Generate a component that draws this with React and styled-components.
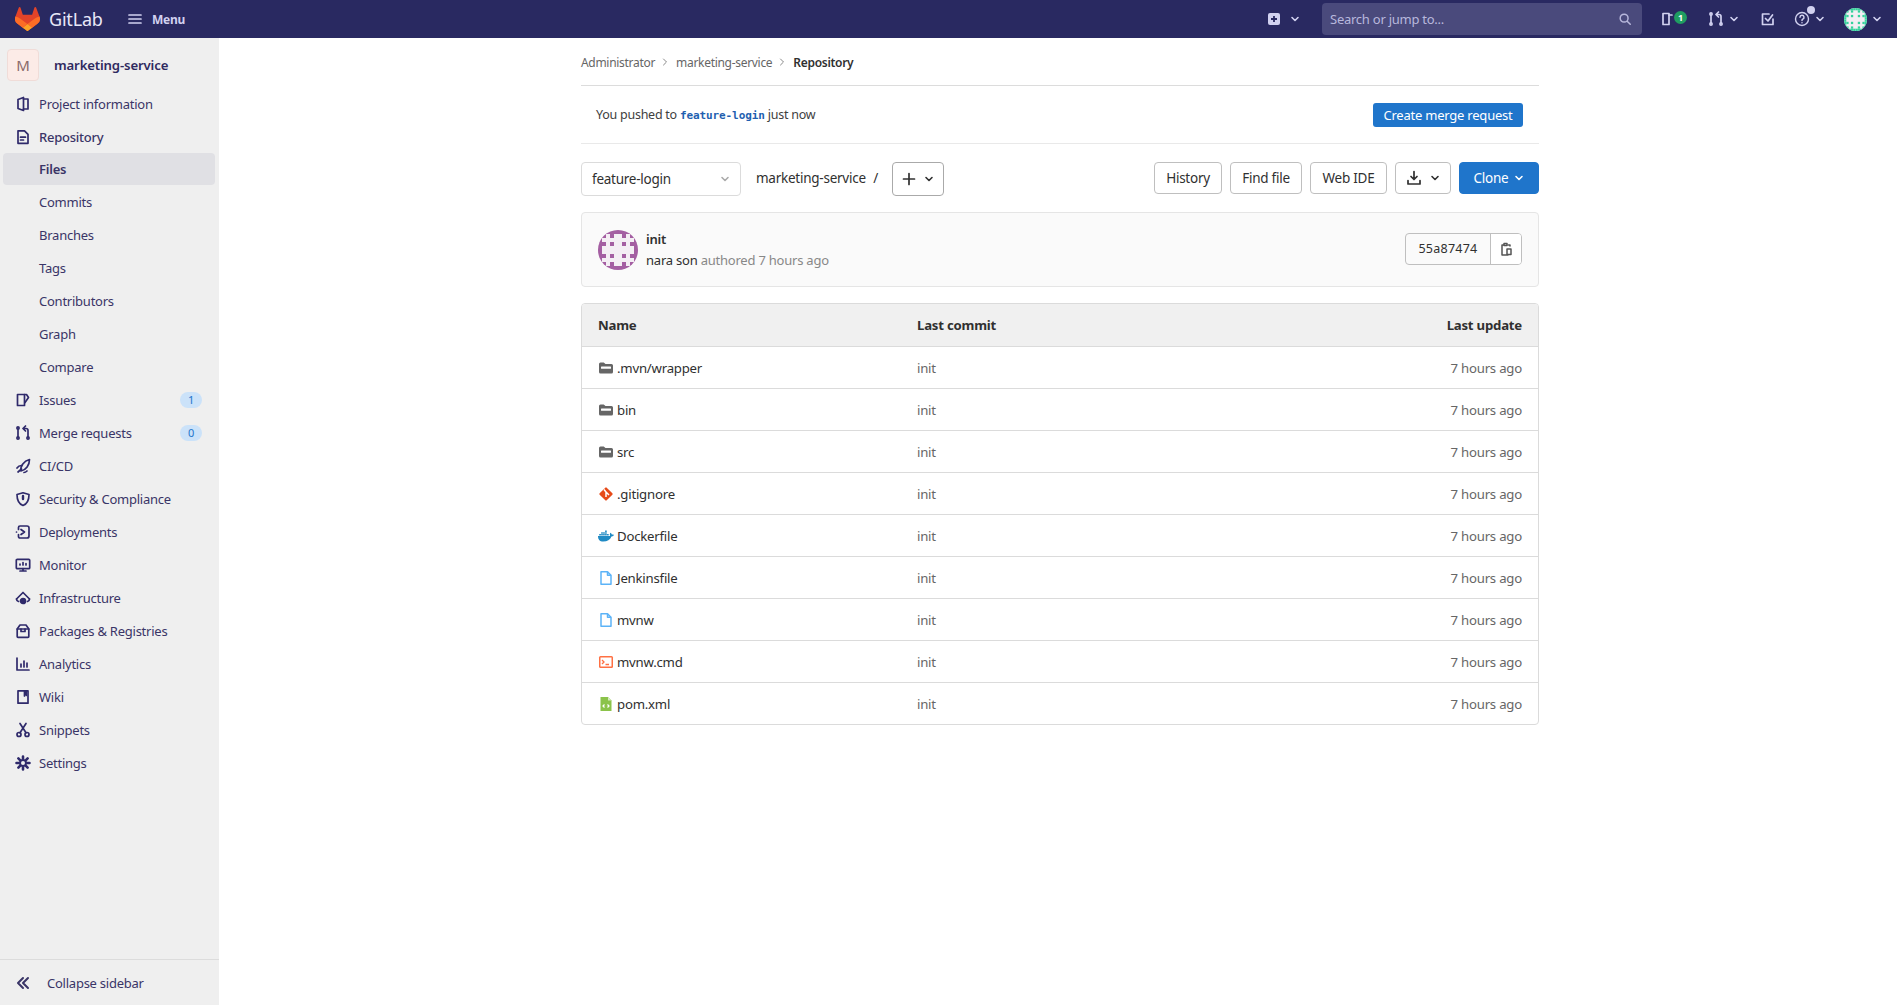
import React from "react";
import styled, { createGlobalStyle } from "styled-components";
import { FaDocker } from "react-icons/fa";

const Global = createGlobalStyle`
  html, body { margin: 0; height: 100%; background: #fff; }
  body { font-family: "Noto Sans", "Liberation Sans", sans-serif; font-size: 13px; color: #303030; overflow: hidden; }
  * { box-sizing: border-box; }
  #root { height: 100%; }
`;

const Page = styled.div`display: flex; flex-direction: column; height: 1005px;`;
const TopBar = styled.header`
  height: 38px; flex: none; background: #292961; display: flex; align-items: center; padding-left: 15px; color: #d1d1f0;
`;
const LogoText = styled.span`font-size: 18px; color: #e8e8f8; margin-left: 9px; letter-spacing: -0.2px; width: 51px;`;
const MenuBtn = styled.div`display: flex; align-items: center; margin-left: 27px; gap: 9px; font-size: 12px; font-weight: 700; color: #d1d1f0; letter-spacing: -0.3px;`;
const TopRight = styled.div`margin-left: auto; display: flex; align-items: center; height: 100%;`;
const TopIcon = styled.div`display: flex; align-items: center; gap: ${p => p.$gap ?? 5}px; margin-left: ${p => p.$ml ?? 0}px; color: #d1d1f0; position: relative;`;
const Search = styled.div`
  width: 320px; height: 32px; margin-left: 22px; background: #4a4a7c; border-radius: 4px; display: flex; align-items: center; justify-content: space-between;
  padding: 0 10px 0 8px; font-size: 13px; color: #b8b8dc; letter-spacing: -0.25px;
`;
const CountBadge = styled.span`
  position: absolute; left: 14px; top: 0; width: 13px; height: 13px; border-radius: 50%; background: #1f9d61; color: #fff; font-size: 9px; line-height: 13px; text-align: center; font-weight: 700;
`;
const Dot = styled.span`position: absolute; left: 13px; top: -5px; width: 8px; height: 8px; border-radius: 50%; background: #d1d1f0;`;

const Body = styled.div`flex: 1; display: flex; min-height: 0;`;
const Sidebar = styled.aside`width: 219px; flex: none; background: #efefef; display: flex; flex-direction: column;`;
const ProjectHead = styled.div`display: flex; align-items: center; padding: 8px 0 0 7px; height: 46px; flex: none; margin-bottom: 1px;`;
const ProjectAvatar = styled.div`
  width: 32px; height: 32px; border-radius: 4px; background: #fcebe7; border: 1px solid #f0dcd8; display: flex; align-items: center; justify-content: center; font-size: 15px; color: #8a6a6a;
`;
const ProjectName = styled.span`margin-left: 15px; font-weight: 600; font-size: 13.2px; color: #2f2a5f; letter-spacing: -0.15px;`;
const Nav = styled.nav`display: flex; flex-direction: column; padding-top: 2px;`;
const NavItem = styled.div`
  display: flex; align-items: center; height: ${p => p.$h || 33}px; margin: 0 4px 0 3px; padding: 0 13px 0 12px; border-radius: 4px; color: #3a3567;
  font-size: 13px; letter-spacing: -0.24px; flex: none;
  font-weight: ${p => (p.$strong ? 500 : 400)};
  background: ${p => (p.$active ? "#e0e0e4" : "transparent")};
  ${p => p.$active && "font-weight: 600;"}
`;
const NavIcon = styled.span`width: 16px; height: 16px; margin-right: 8px; display: flex; color: #2f2a6b; flex: none;`;
const NavSpacer = styled.span`width: 24px; flex: none;`;
const NavBadge = styled.span`
  margin-left: auto; width: 22px; height: 16px; border-radius: 8px; background: #cbe2f9; color: #1f75cb; font-size: 11px; text-align: center; line-height: 16px;
`;
const Collapse = styled.div`
  margin-top: auto; height: 46px; flex: none; border-top: 1px solid #dcdcdc; display: flex; align-items: center; padding-left: 15px; color: #3a3567; letter-spacing: -0.24px;
`;
const CollapseLabel = styled.span`margin-left: 16px;`;

const Main = styled.main`flex: 1; padding-left: 362px;`;
const Container = styled.div`width: 958px;`;
const Crumbs = styled.div`height: 48px; display: flex; align-items: center; font-size: 12px; border-bottom: 1px solid #dcdcdc; color: #666; letter-spacing: -0.3px; padding-top: 1px;`;
const CrumbSep = styled.span`margin: 0 7px 0 6px; display: flex; color: #888;`;
const CrumbCurrent = styled.span`color: #303030; font-weight: 600;`;
const Flash = styled.div`
  height: 58px; display: flex; align-items: center; justify-content: space-between; padding: 0 16px 0 15px; border-bottom: 1px solid #e9e9e9; font-size: 12.5px; color: #404040; letter-spacing: -0.25px;
`;
const BranchCode = styled.code`font-family: "DejaVu Sans Mono", "Liberation Mono", monospace; font-size: 11px; font-weight: 600; color: #1f5fb0; letter-spacing: -0.1px;`;
const SmallPrimary = styled.div`
  height: 24px; width: 150px; border-radius: 3px; background: #1f75cb; color: #fff; display: flex; align-items: center; justify-content: center; font-size: 13px; letter-spacing: -0.22px;
`;
const Toolbar = styled.div`display: flex; align-items: center; margin-top: 16px; height: 36px;`;
const BranchSelect = styled.div`
  width: 160px; height: 34px; margin-top: 2px; border: 1px solid #dbdbdb; border-radius: 4px; display: flex; align-items: center; justify-content: space-between; padding: 0 10px; font-size: 13.5px; color: #303030; letter-spacing: -0.25px;
`;
const Path = styled.span`margin-left: 15px; font-size: 13.5px; letter-spacing: -0.25px; display: flex; width: 136px; justify-content: space-between; padding-right: 14px;`;
const Btn = styled.div`
  height: 32px; width: ${p => p.$w}px; border: 1px solid #bfbfbf; border-radius: 4px; background: ${p => p.$primary ? "#1f75cb" : "#fff"}; color: ${p => p.$primary ? "#fff" : "#303030"};
  border-color: ${p => p.$primary ? "#1f75cb" : "#bfbfbf"};
  display: flex; align-items: center; justify-content: center; gap: ${p => p.$gap ?? 6}px; font-size: 13.5px; letter-spacing: -0.25px; flex: none; margin-left: ${p => p.$ml ?? 8}px;
`;
const PlusBtn = styled(Btn)`height: 34px; margin-left: 0; margin-top: 1px; border-color: #aaa;`;
const Grow = styled.div`flex: 1;`;
const CommitBox = styled.div`
  margin-top: 16px; height: 75px; border: 1px solid #e5e5e5; border-radius: 4px; background: #fafafa; display: flex; align-items: center; padding: 0 16px 0 16px;
`;
const CommitText = styled.div`margin-left: 8px; display: flex; flex-direction: column; gap: 1px; line-height: 20px; letter-spacing: -0.22px;`;
const CommitTitle = styled.div`font-weight: 600; color: #303030;`;
const CommitMeta = styled.div`color: #888;`;
const Author = styled.span`color: #303030;`;
const HashGroup = styled.div`margin-left: auto; display: flex; height: 32px; border: 1px solid #bfbfbf; border-radius: 4px; overflow: hidden; margin-top: -2px;`;
const HashText = styled.div`width: 85px; border-right: 1px solid #bfbfbf; display: flex; align-items: center; justify-content: center; font-family: "Noto Sans", sans-serif; font-size: 12.5px; letter-spacing: .25px;`;
const CopyBtn = styled.div`width: 30px; background: #fff; display: flex; align-items: center; justify-content: center; color: #555;`;
const Table = styled.div`margin-top: 16px; border: 1px solid #dbdbdb; border-radius: 4px; overflow: hidden;`;
const Row = styled.div`
  display: grid; grid-template-columns: 319px 1fr auto; align-items: center; height: 42px; padding: 0 16px; border-top: 1px solid #dbdbdb; letter-spacing: -0.22px; font-size: 13.2px;
  &:first-child { border-top: 0; background: #f0f0f0; font-weight: 700; height: 42px; }
`;
const NameCell = styled.div`display: flex; align-items: center;`;
const FileIcon = styled.span`width: 16px; height: 16px; margin-right: 3px; display: flex; align-items: center; justify-content: center;`;
const FileLink = styled.span`color: #303030;`;
const CommitCell = styled.span`color: #666;`;
const TimeCell = styled.span`color: #666;`;

const S = ({ children, size = 16, vb = "0 0 16 16", ...rest }) => (
  <svg width={size} height={size} viewBox={vb} fill="none" stroke="currentColor" strokeWidth="1.7" strokeLinecap="round" strokeLinejoin="round" {...rest}>{children}</svg>
);

const Chevron = ({ size = 10, color = "currentColor" }) => (
  <svg width={size} height={size} viewBox="0 0 10 10" fill="none" stroke={color} strokeWidth="1.6" strokeLinecap="round" strokeLinejoin="round"><path d="M2 3.5 5 6.5 8 3.5" /></svg>
);

const Logo = () => (
  <svg width="25" height="24" viewBox="0 0 25 24">
    <path fill="#E24329" d="M24.507 9.5l-.034-.09L21.082.562a.896.896 0 00-1.694.091l-2.29 7.01H7.825L5.535.653a.898.898 0 00-1.694-.09L.451 9.411.416 9.5a6.297 6.297 0 002.09 7.278l.012.01.03.022 5.16 3.867 2.56 1.935 1.554 1.176a1.051 1.051 0 001.268 0l1.555-1.176 2.56-1.935 5.197-3.89.014-.01A6.297 6.297 0 0024.507 9.5z" />
    <path fill="#FC6D26" d="M24.507 9.5l-.034-.09a11.44 11.44 0 00-4.56 2.051l-7.447 5.632 4.742 3.584 5.197-3.89.014-.01A6.297 6.297 0 0024.507 9.5z" />
    <path fill="#FCA326" d="M7.707 20.677l2.56 1.935 1.555 1.176a1.051 1.051 0 001.268 0l1.555-1.176 2.56-1.935-4.743-3.584-4.755 3.584z" />
    <path fill="#FC6D26" d="M5.01 11.461a11.43 11.43 0 00-4.56-2.05L.416 9.5a6.297 6.297 0 002.09 7.278l.012.01.03.022 5.16 3.867 4.745-3.584-7.444-5.632z" />
  </svg>
);

const icons = {
  project: <S><path d="M3 3.5 8.5 1.5v13L3 12.5z" /><path d="M8.5 3H13v10H8.5" /></S>,
  repo: <S><path d="M3 1.8h6.5L13 5.3v9H3z" /><path d="M5.5 8.2h5M5.5 11h3" /></S>,
  issues: <S><path d="M9.5 2.5H2.5v11h7z" /><path d="M9.5 2.5h2l2 3-3.5 5" /></S>,
  mr: <S><circle cx="3" cy="3" r="1.1" /><circle cx="3" cy="13" r="1.1" /><circle cx="13" cy="13" r="1.1" /><path d="M3 4.5v7M13 11.5V5.5a2 2 0 0 0-2-2H8.5M10.5 1 8 3.5 10.5 6" /></S>,
  cicd: <S><path d="M6 13C5 8 9 3 14.5 1.5 14.5 7 11 12 6 13z" /><path d="M2 10c1-1.5 2.5-2.5 4.5-2.5M3 14l3.5-3M9 14.5c1 0 2-.5 3-1.5" /></S>,
  shield: <S><path d="M8 1.8 14 3.5C14 9 12 13 8 14.5 4 13 2 9 2 3.5z" /><path d="M8 5v3" strokeWidth="2.4" /></S>,
  deploy: <S><path d="M3.5 10.5v2a1.5 1.5 0 0 0 1.5 1.5h7a2 2 0 0 0 2-2V4a2 2 0 0 0-2-2H5a1.5 1.5 0 0 0-1.5 1.5v2" /><path d="M1.5 8h0M6 5.5 9.5 8 6 10.5" /></S>,
  monitor: <S><rect x="1.3" y="2.3" width="13.4" height="9.4" rx="1" /><path d="M5 14h6M8 11.7V14M5 8V7M8 8V5.5M11 8V6.5" /></S>,
  infra: <S><path d="M1.5 9 8 2.5 14.5 9" /><path d="M3.5 11.5C2 11 1.5 10 1.5 9M12.5 11.5c1.5-.5 2-1.5 2-2.5" /><circle cx="8" cy="11" r="2.5" fill="currentColor" /></S>,
  pkg: <S><path d="M2.2 6h11.6v7.5a.8.8 0 0 1-.8.8H3a.8.8 0 0 1-.8-.8z" /><path d="M2.2 6 5 2h6l2.8 4" /><path d="M6 6v2.5h4V6" /></S>,
  analytics: <S><path d="M2 2v12h12" /><path d="M6 11V8M9 11V5M12 11V7" /></S>,
  wiki: <S><path d="M3 1.8h10v12.4H3z" /><path d="M9 2v5.5l1.5-1 1.5 1V2" fill="currentColor" stroke="none" /><path d="M9.5 2v5" /></S>,
  snippets: <S><circle cx="4" cy="12.5" r="2" /><circle cx="12" cy="12.5" r="2" /><path d="M5 10.8 11 1.5M11 10.8 5 1.5" /></S>,
  settings: <S strokeWidth="2"><circle cx="8" cy="8" r="3" /><path d="M8 1.5v2M8 12.5v2M1.5 8h2M12.5 8h2M3.4 3.4l1.4 1.4M11.2 11.2l1.4 1.4M3.4 12.6l1.4-1.4M11.2 4.8l1.4-1.4" strokeWidth="2.6" /></S>,
};

const items = [
  { label: "Project information", icon: "project" },
  { label: "Repository", icon: "repo", strong: true, h: 33 },
  { label: "Files", active: true, h: 32 },
  { label: "Commits" }, { label: "Branches" }, { label: "Tags" }, { label: "Contributors" }, { label: "Graph" }, { label: "Compare" },
  { label: "Issues", icon: "issues", badge: 1 },
  { label: "Merge requests", icon: "mr", badge: 0 },
  { label: "CI/CD", icon: "cicd" },
  { label: "Security & Compliance", icon: "shield" },
  { label: "Deployments", icon: "deploy" },
  { label: "Monitor", icon: "monitor" },
  { label: "Infrastructure", icon: "infra" },
  { label: "Packages & Registries", icon: "pkg" },
  { label: "Analytics", icon: "analytics" },
  { label: "Wiki", icon: "wiki" },
  { label: "Snippets", icon: "snippets" },
  { label: "Settings", icon: "settings" },
];

const Folder = () => (
  <svg width="16" height="16" viewBox="0 0 16 16"><path fill="#666" d="M1 4a1.5 1.5 0 0 1 1.5-1.5h3.2L7.5 4h6A1.5 1.5 0 0 1 15 5.500v6.500a1.500 1.500 0 0 1-1.500 1.500h-11A1.500 1.500 0 0 1 1 12z" /><rect x="3" y="6.600" width="10" height="2.200" rx=".5" fill="#fff" /></svg>
);
const GitIcon = () => (
  <svg width="16" height="16" viewBox="0 0 16 16"><rect x="3" y="3" width="10" height="10" rx="1" transform="rotate(45 8 8)" fill="#e64a19" /><path d="M6 3.500 8 6v5M8 6l3 3" stroke="#fff" strokeWidth="1.500" fill="none" /></svg>
);
const BlueFile = () => (
  <svg width="16" height="16" viewBox="0 0 16 16" fill="none" stroke="#5cb3f7" strokeWidth="1.500" strokeLinejoin="round"><path d="M3 1.800h6.500L13 5.300v9H3z" /><path d="M9.500 1.800v3.500H13" /></svg>
);
const TermIcon = () => (
  <svg width="16" height="16" viewBox="0 0 16 16"><rect x="1" y="2" width="14" height="12" rx="1.500" fill="#ff7043" /><rect x="2.500" y="3.500" width="11" height="9" fill="#fff" /><path d="M4 6l2 2-2 2M7.500 10.500H11" stroke="#ff7043" strokeWidth="1.300" fill="none" /></svg>
);
const XmlIcon = () => (
  <svg width="16" height="16" viewBox="0 0 16 16"><path d="M2.500 1h7.500L13.500 4.500V15h-11z" fill="#8bc34a" /><path d="M10 1v3.500h3.500z" fill="#d7ecc0" /><path d="M6.500 8.500 5 10l1.500 1.500M9.500 8.500 11 10l-1.500 1.500" stroke="#fff" strokeWidth="1.200" fill="none" /></svg>
);

const files = [
  { name: ".mvn/wrapper", icon: <Folder /> },
  { name: "bin", icon: <Folder /> },
  { name: "src", icon: <Folder /> },
  { name: ".gitignore", icon: <GitIcon /> },
  { name: "Dockerfile", icon: <FaDocker size={16} color="#1f8ac4" /> },
  { name: "Jenkinsfile", icon: <BlueFile /> },
  { name: "mvnw", icon: <BlueFile /> },
  { name: "mvnw.cmd", icon: <TermIcon /> },
  { name: "pom.xml", icon: <XmlIcon /> },
];

const Identicon = ({ size, color, cells = 5 }) => {
  const u = 40 / 10;
  const rects = [];
  for (let y = 0; y < 10; y++) for (let x = 0; x < 10; x++) {
    const mx = x < 5 ? x : 9 - x; const my = y < 5 ? y : 9 - y;
    const on = (mx === 0 && my >= 2) || (my === 0 && mx >= 2) || (mx === 1 && my === 1) || (mx === 1 && my === 3) || (mx === 3 && my === 1) || (mx === 3 && my === 3);
    if (on) rects.push(<rect key={`${x}-${y}`} x={x * u} y={y * u} width={u} height={u} fill={color} />);
  }
  return (
    <svg width={size} height={size} viewBox="0 0 40 40" style={{ borderRadius: "50%", background: "#f4eef4", flex: "none" }}>
      {rects}
    </svg>
  );
};

export default function App() {
  return (
    <Page>
      <Global />
      <TopBar>
        <Logo />
        <LogoText>GitLab</LogoText>
        <MenuBtn>
          <S width="16" height="16"><path d="M2 4h12M2 8h12M2 12h12" /></S>
          Menu
        </MenuBtn>
        <TopRight>
          <TopIcon $gap={10}>
            <svg width="12" height="12" viewBox="0 0 12 12"><rect width="12" height="12" rx="2" fill="#d1d1f0" /><path d="M6 3v6M3 6h6" stroke="#292961" strokeWidth="1.800" /></svg>
            <Chevron />
          </TopIcon>
          <Search>
            Search or jump to...
            <S width="14" height="14"><circle cx="7" cy="7" r="4.500" /><path d="M10.500 10.500 14 14" /></S>
          </Search>
          <TopIcon $ml={18}>
            <S width="16" height="16"><path d="M3 2.500h6v11H3z" /><path d="M9 4h3" /></S>
            <CountBadge>1</CountBadge>
          </TopIcon>
          <TopIcon $ml={32}>
            <S width="16" height="16"><circle cx="3" cy="3" r="1.100" /><circle cx="3" cy="13" r="1.100" /><circle cx="13" cy="13" r="1.100" /><path d="M3 4.500v7M13 11.500V5.500a2 2 0 0 0-2-2H8.500M10.500 1 8 3.500 10.500 6" /></S>
            <Chevron />
          </TopIcon>
          <TopIcon $ml={22}>
            <S width="14" height="14" vb="0 0 14 14"><path d="M12 7v5.500H1.500V2H8" /><path d="M4.500 6.500 7 9l4.500-6" /></S>
          </TopIcon>
          <TopIcon $ml={19}>
            <S width="16" height="16"><circle cx="8" cy="8" r="6.500" strokeWidth="1.400" /><path d="M6 6.200a2 2 0 1 1 2.600 2c-.5.200-.6.600-.6 1.300M8 11.800v0" strokeWidth="1.500" /></S>
            <Dot />
            <Chevron />
          </TopIcon>
          <TopIcon $ml={19} style={{ marginRight: 15 }}>
            <Identicon size={23} color="#35d29c" />
            <Chevron />
          </TopIcon>
        </TopRight>
      </TopBar>
      <Body>
        <Sidebar>
          <ProjectHead>
            <ProjectAvatar>M</ProjectAvatar>
            <ProjectName>marketing-service</ProjectName>
          </ProjectHead>
          <Nav>
            {items.map(it => (
              <NavItem key={it.label} $active={it.active} $strong={it.strong} $h={it.h}>
                {it.icon ? <NavIcon>{icons[it.icon]}</NavIcon> : <NavSpacer />}
                {it.label}
                {it.badge !== undefined && <NavBadge>{it.badge}</NavBadge>}
              </NavItem>
            ))}
          </Nav>
          <Collapse>
            <S width="16" height="16" strokeWidth="2"><path d="M8 3 3 8l5 5M13 3 8 8l5 5" /></S>
            <CollapseLabel>Collapse sidebar</CollapseLabel>
          </Collapse>
        </Sidebar>
        <Main>
          <Container>
            <Crumbs>
              Administrator
              <CrumbSep><S width="8" height="8" vb="0 0 8 8" strokeWidth="1"><path d="M2.500 1 5.500 4 2.500 7" /></S></CrumbSep>
              marketing-service
              <CrumbSep><S width="8" height="8" vb="0 0 8 8" strokeWidth="1"><path d="M2.500 1 5.500 4 2.500 7" /></S></CrumbSep>
              <CrumbCurrent>Repository</CrumbCurrent>
            </Crumbs>
            <Flash>
              <span>You pushed to <BranchCode>feature-login</BranchCode> just now</span>
              <SmallPrimary>Create merge request</SmallPrimary>
            </Flash>
            <Toolbar>
              <BranchSelect>feature-login<Chevron color="#aaa" /></BranchSelect>
              <Path><span>marketing-service</span><span>/</span></Path>
              <PlusBtn $w={52} $gap={8}>
                <S width="14" height="14" vb="0 0 14 14"><path d="M7 1.500v11M1.500 7h11" /></S>
                <Chevron />
              </PlusBtn>
              <Grow />
              <Btn $w={68}>History</Btn>
              <Btn $w={72}>Find file</Btn>
              <Btn $w={77}>Web IDE</Btn>
              <Btn $w={56} $gap={8}>
                <S width="16" height="16"><path d="M8 1.500V9M5 6.500 8 9.500l3-3M2 10.500v3.500h12v-3.500" /></S>
                <Chevron />
              </Btn>
              <Btn $w={80} $primary>Clone <Chevron /></Btn>
            </Toolbar>
            <CommitBox>
              <Identicon size={40} color="#a45ea2" />
              <CommitText>
                <CommitTitle>init</CommitTitle>
                <CommitMeta><Author>nara son</Author> authored 7 hours ago</CommitMeta>
              </CommitText>
              <HashGroup>
                <HashText>55a87474</HashText>
                <CopyBtn>
                  <S width="14" height="14" vb="0 0 14 14" strokeWidth="1.500"><path d="M9.500 3H11v1M9 13H3V3h1.500M5 3V1.500h3V3.500H5zM8 7h4v5.500H8z" /></S>
                </CopyBtn>
              </HashGroup>
            </CommitBox>
            <Table>
              <Row>
                <span>Name</span><span>Last commit</span><span>Last update</span>
              </Row>
              {files.map(f => (
                <Row key={f.name}>
                  <NameCell><FileIcon>{f.icon}</FileIcon><FileLink>{f.name}</FileLink></NameCell>
                  <CommitCell>init</CommitCell>
                  <TimeCell>7 hours ago</TimeCell>
                </Row>
              ))}
            </Table>
          </Container>
        </Main>
      </Body>
    </Page>
  );
}
